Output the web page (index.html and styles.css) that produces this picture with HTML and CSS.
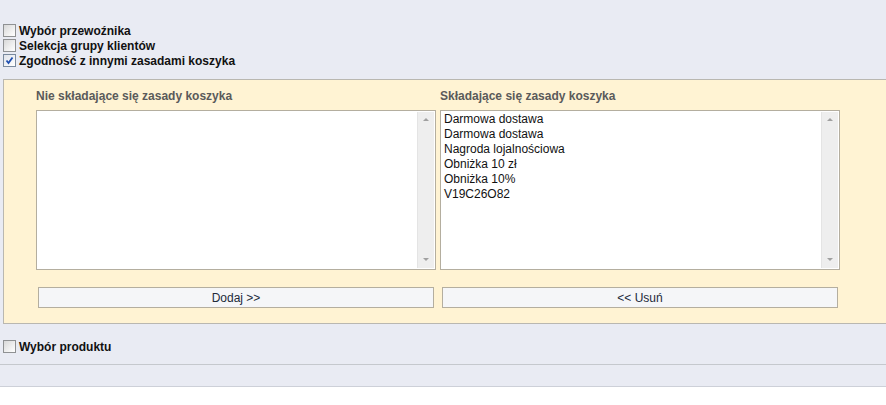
FILE: index.html
```html
<!DOCTYPE html>
<html lang="pl">
    <head>
        <meta charset="UTF-8" />
        <title>Warunki reguły koszyka</title>
        <link rel="stylesheet" href="styles.css">
    </head>
    <body>
        <div class="page">
            <div class="options">
                <label class="check-row"><span class="checkbox"></span>Wybór przewoźnika</label>
                <label class="check-row"><span class="checkbox"></span>Selekcja grupy klientów</label>
                <label class="check-row">
                    <span class="checkbox checked">
                        <svg width="9" height="9" viewBox="0 0 9 9"><path d="M1.5 4.5 L3.5 7 L7.5 1.5" fill="none" stroke="#1f4fb0" stroke-width="1.8"/></svg>
                    </span>Zgodność z innymi zasadami koszyka
                </label>
            </div>

            <div class="panel">
                <div class="columns">
                    <div class="column">
                        <div class="column-title">Nie składające się zasady koszyka</div>
                        <div class="listbox">
                            <div class="list-items"></div>
                            <div class="scrollbar"><span class="arrow up"></span><span class="arrow down"></span></div>
                        </div>
                        <button class="action-button">Dodaj &gt;&gt;</button>
                    </div>
                    <div class="column">
                        <div class="column-title">Składające się zasady koszyka</div>
                        <div class="listbox">
                            <div class="list-items">
                                <div>Darmowa dostawa</div>
                                <div>Darmowa dostawa</div>
                                <div>Nagroda lojalnościowa</div>
                                <div>Obniżka 10 zł</div>
                                <div>Obniżka 10%</div>
                                <div>V19C26O82</div>
                            </div>
                            <div class="scrollbar"><span class="arrow up"></span><span class="arrow down"></span></div>
                        </div>
                        <button class="action-button">&lt;&lt; Usuń</button>
                    </div>
                </div>
            </div>

            <div class="product-row">
                <label class="check-row"><span class="checkbox"></span>Wybór produktu</label>
            </div>
            <div class="footer-strip"></div>
        </div>
    </body>
</html>
```

FILE: styles.css
```css
* {
    box-sizing: border-box;
}

body {
    margin: 0;
    background: #ffffff;
    font-family: "Liberation Sans", Arial, sans-serif;
    font-size: 12px;
    color: #000;
}

.page {
    background: #e9ebf3;
    border-bottom: 1px solid #cdd0d8;
}

.options {
    padding-top: 23px;
}

.check-row {
    display: flex;
    align-items: center;
    height: 15px;
    padding-left: 3px;
    font-weight: bold;
    color: #111;
    cursor: pointer;
}

.checkbox {
    display: inline-flex;
    justify-content: center;
    align-items: center;
    width: 13px;
    height: 13px;
    margin-right: 3px;
    border: 1px solid #8f9193;
    background: linear-gradient(135deg, #d8d8d8 0%, #f4f4f4 70%, #ffffff 100%);
}

.checkbox.checked {
    border-color: #7a8a9e;
    background: linear-gradient(135deg, #dfe3ea 0%, #f6f7f9 70%, #ffffff 100%);
}

.panel {
    margin: 11px 0 0 3px;
    border: 1px solid #b9b7b0;
    border-right: none;
    background: #fff3d3;
    padding: 9px 0 15px 32px;
}

.columns {
    display: grid;
    grid-template-columns: 400px 400px;
    column-gap: 4px;
}

.column-title {
    font-weight: bold;
    color: #5a5a5a;
    height: 14px;
    line-height: 14px;
    margin-bottom: 7px;
}

.listbox {
    display: flex;
    height: 160px;
    border: 1px solid #b4ae9f;
    background: #ffffff;
}

.list-items {
    flex: 1;
    padding: 1px 3px;
    line-height: 15px;
    color: #111;
}

.scrollbar {
    width: 17px;
    margin: 1px 1px 1px 0;
    background: #eeeeee;
    border-left: 1px solid #e4e4e4;
    display: flex;
    flex-direction: column;
    justify-content: space-between;
    align-items: center;
    padding: 6px 0 7px;
}

.arrow {
    width: 0;
    height: 0;
    border-left: 3px solid transparent;
    border-right: 3px solid transparent;
}

.arrow.up {
    border-bottom: 3px solid #a0a0a0;
}

.arrow.down {
    border-top: 3px solid #a0a0a0;
}

.action-button {
    display: block;
    width: 396px;
    height: 21px;
    margin: 17px 0 0 2px;
    padding: 0;
    border: 1px solid #b4ae9f;
    background: #f5f6f8;
    font-family: "Liberation Sans", Arial, sans-serif;
    font-size: 12px;
    color: #222a3a;
}

.product-row {
    padding: 15px 0 10px;
    border-bottom: 1px solid #c5c8cd;
}

.footer-strip {
    height: 21px;
}
```
